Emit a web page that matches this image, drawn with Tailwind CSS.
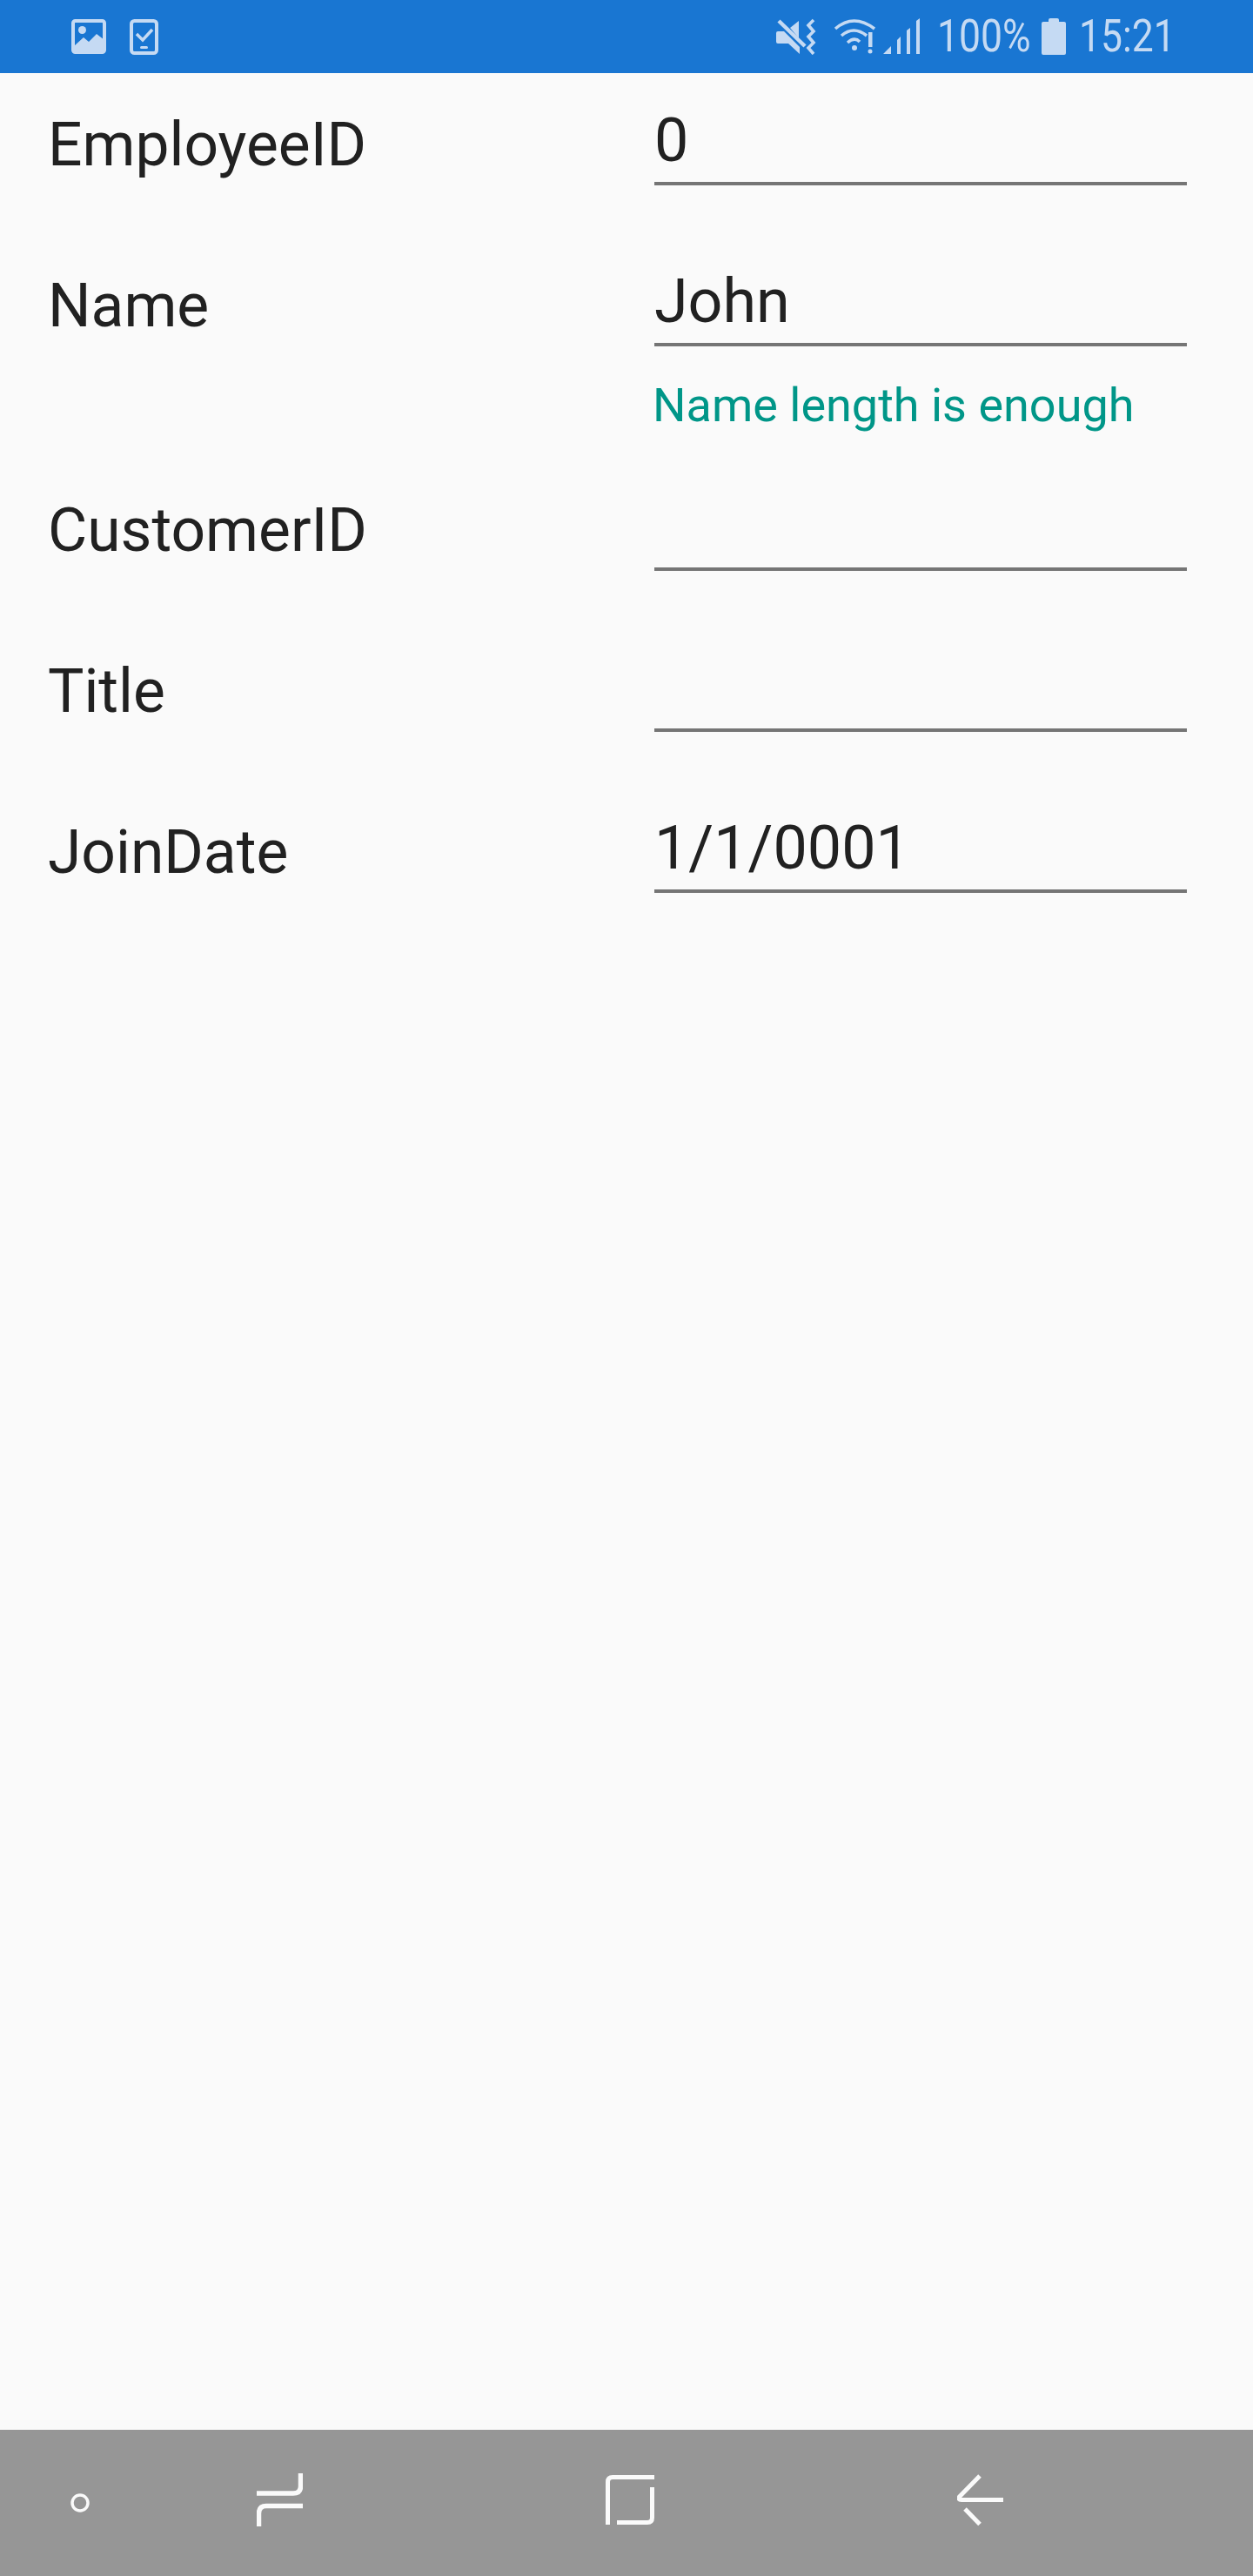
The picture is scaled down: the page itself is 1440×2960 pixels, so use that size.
<!doctype html>
<html><head><meta charset="utf-8"><script src="https://cdn.jsdelivr.net/npm/@tailwindcss/browser@4"></script></head>
<body class="m-0">
<div class="w-[1440px] h-[2960px] flex flex-col bg-[#fafafa] font-['Roboto',sans-serif] overflow-hidden">
  <header class="h-[84px] shrink-0 bg-[#1976d2] flex items-center pl-[82px] pr-[92px] text-[#c5daf3]">
    <svg class="w-[40px] h-[40px] mr-[27px]" viewBox="0 0 40 40"><rect x="2" y="2" width="36" height="36" rx="2.5" fill="none" stroke="#c5daf3" stroke-width="4"/><circle cx="12.5" cy="12.5" r="4.5" fill="#c5daf3"/><path d="M3 31 L14 21 L20 26 L29 17 L38 24 V38 H3Z" fill="#c5daf3"/></svg>
    <svg class="w-[33px] h-[41px]" viewBox="0 0 33 41"><rect x="2" y="2" width="29" height="37" rx="3.5" fill="none" stroke="#c5daf3" stroke-width="4"/><path d="M8 17 L15 24 L26 12" fill="none" stroke="#c5daf3" stroke-width="3.5"/><rect x="12" y="31" width="9" height="3" rx="1.5" fill="#c5daf3"/></svg>
    <div class="ml-auto flex items-center">
      <svg class="w-[46px] h-[42px] mr-[20px]" viewBox="0 0 46 42"><path d="M0 17 Q0 15 2 15 H9 L27 33 V41 L14 29 H2 Q0 29 0 27Z M16 11 L26 3 V23Z" fill="#c5daf3"/><path d="M3 3 L33 32" stroke="#c5daf3" stroke-width="4.5"/><path d="M43 2 L37 8 L43 15 L37 21 L43 28 L37 34 L43 41" fill="none" stroke="#c5daf3" stroke-width="3.6"/></svg>
      <svg class="w-[48px] h-[42px] mr-[9px]" viewBox="0 0 48 42"><path d="M2 12 Q23 -6 47 12 M9 20 Q23 8 38 20 M16 28 Q24 21 30 27" fill="none" stroke="#c5daf3" stroke-width="3.6"/><circle cx="24" cy="34" r="3" fill="#c5daf3"/><rect x="40" y="16" width="4.5" height="17" fill="#c5daf3"/><circle cx="42" cy="38" r="2.5" fill="#c5daf3"/></svg>
      <svg class="w-[44px] h-[42px] mr-[18px]" viewBox="0 0 44 42"><path d="M0 41 L9 32 V41Z M16 41 V25 L20 21 V41Z M27 41 V14 L31 11 V41Z M38 41 V3 L42 0 V41Z" fill="#c5daf3"/></svg>
      <span class="text-[52px] leading-[52px] w-[108px] scale-x-[0.855] origin-left whitespace-nowrap">100%</span>
      <svg class="w-[28px] h-[42px] ml-[12px] mr-[15px]" viewBox="0 0 28 42"><path d="M8 2 Q8 0 10 0 H18 Q20 0 20 2 V4 H26 Q28 4 28 6 V40 Q28 42 26 42 H2 Q0 42 0 40 V6 Q0 4 2 4 H8Z" fill="#c5daf3"/></svg>
      <span class="text-[52px] leading-[52px] w-[108px] scale-x-[0.855] origin-left whitespace-nowrap">15:21</span>
    </div>
  </header>
  <main class="flex-1 flex flex-col pl-[55px] pr-[76px] text-[69.5px] leading-[80px] text-[#212121]">
    <div class="grid grid-cols-[697px_1fr] h-[129px] mb-[56px]">
      <div class="pt-[43px]">EmployeeID</div>
      <div class="border-b-[4px] border-[#757575] pt-[37px] text-[70px]">0</div>
    </div>
    <div class="grid grid-cols-[697px_1fr] h-[129px]">
      <div class="pt-[43px]">Name</div>
      <div class="border-b-[4px] border-[#757575] pt-[37px] text-[70px]">John</div>
    </div>
    <div class="grid grid-cols-[697px_1fr] h-[129px]">
      <div></div>
      <div class="pt-[35px] -ml-[2px] text-[54px] leading-[66px] text-[#009688] whitespace-nowrap">Name length is enough</div>
    </div>
    <div class="grid grid-cols-[697px_1fr] h-[129px] mb-[56px]">
      <div class="pt-[43px]">CustomerID</div>
      <div class="border-b-[4px] border-[#757575] pt-[37px]"></div>
    </div>
    <div class="grid grid-cols-[697px_1fr] h-[129px] mb-[56px]">
      <div class="pt-[43px]">Title</div>
      <div class="border-b-[4px] border-[#757575] pt-[37px]"></div>
    </div>
    <div class="grid grid-cols-[697px_1fr] h-[129px] mb-[56px]">
      <div class="pt-[43px]">JoinDate</div>
      <div class="border-b-[4px] border-[#757575] pt-[37px] text-[70px]">1/1/0001</div>
    </div>
  </main>
  <nav class="h-[168px] shrink-0 bg-[#969696] flex items-start pt-[50px] pl-[81px]">
    <svg class="w-[22px] h-[62px] mr-[192px]" viewBox="0 0 22 62"><circle cx="11" cy="34" r="9" fill="none" stroke="#fafafa" stroke-width="3.5"/></svg>
    <svg class="w-[53px] h-[62px] mr-[348px]" viewBox="0 0 53 62" fill="none" stroke="#fafafa"><path stroke-width="5.5" d="M50.5 0 V15 Q50.5 23 42 23 H0"/><path stroke-width="5.5" d="M53 37.5 H11 Q2.5 37.5 2.5 46 V61"/></svg>
    <svg class="w-[56px] h-[62px] mr-[348px]" viewBox="0 0 56 62" fill="none" stroke="#fafafa" stroke-width="5"><path d="M2.5 59 V10 Q2.5 4.5 8 4.5 H56"/><path d="M53.5 16 V51 Q53.5 56.5 48 56.5 H13"/></svg>
    <svg class="w-[53px] h-[62px]" viewBox="0 0 53 62" fill="none" stroke="#fafafa" stroke-width="5"><path d="M26 3 L2.5 27 Q0.5 30.5 5 30.5 H53"/><path d="M9 41 L26 58.5"/></svg>
  </nav>
</div>
</body></html>
